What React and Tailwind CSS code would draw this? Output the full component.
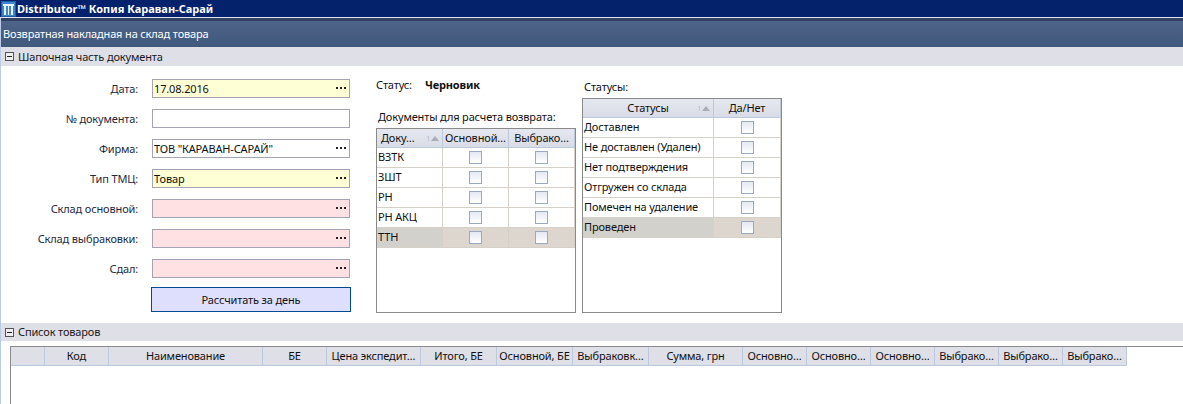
const font = { fontFamily: '"Noto Sans", sans-serif' };

const fields = [
  { label: "Дата:", value: "17.08.2016", bg: "bg-[#ffffd5]", dots: true },
  { label: "№ документа:", value: "", bg: "bg-white", dots: false },
  { label: "Фирма:", value: 'ТОВ "КАРАВАН-САРАЙ"', bg: "bg-white", dots: true },
  { label: "Тип ТМЦ:", value: "Товар", bg: "bg-[#ffffd5]", dots: true },
  { label: "Склад основной:", value: "", bg: "bg-[#ffe1e4]", dots: true },
  { label: "Склад выбраковки:", value: "", bg: "bg-[#ffe1e4]", dots: true },
  { label: "Сдал:", value: "", bg: "bg-[#ffe1e4]", dots: true },
];

const docs = ["ВЗТК", "ЗШТ", "РН", "РН АКЦ", "ТТН"];
const statuses = ["Доставлен", "Не доставлен (Удален)", "Нет подтверждения", "Отгружен со склада", "Помечен на удаление", "Проведен"];

const columns = [
  { title: "", w: "w-[34px]" },
  { title: "Код", w: "w-[64px]" },
  { title: "Наименование", w: "w-[154px]" },
  { title: "БЕ", w: "w-[64px]" },
  { title: "Цена экспедит…", w: "w-[94px]" },
  { title: "Итого, БЕ", w: "w-[76px]" },
  { title: "Основной, БЕ", w: "w-[76px]" },
  { title: "Выбраковк…", w: "w-[76px]" },
  { title: "Сумма, грн", w: "w-[94px]" },
  { title: "Основно…", w: "w-[64px]" },
  { title: "Основно…", w: "w-[64px]" },
  { title: "Основно…", w: "w-[64px]" },
  { title: "Выбрако…", w: "w-[64px]" },
  { title: "Выбрако…", w: "w-[64px]" },
  { title: "Выбрако…", w: "w-[64px]" },
];

function Logo() {
  return (
    <svg width="15" height="16" viewBox="0 0 15 16" className="shrink-0">
      <rect width="15" height="16" fill="#1d5ea8" />
      <rect x="1" y="1" width="13" height="14" fill="#3f86cb" />
      <rect x="2" y="3" width="11" height="2" fill="#e8f2fb" />
      <rect x="3" y="5" width="2" height="9" fill="#e8f2fb" />
      <rect x="7" y="5" width="1" height="9" fill="#e8f2fb" />
      <rect x="10" y="5" width="2" height="9" fill="#e8f2fb" />
    </svg>
  );
}

function SectionHeader({ title, tall }) {
  return (
    <div className={`flex items-center bg-[#dfdfe7] pl-[4px] text-[#1a1a1a] ${tall ? "h-[19px]" : "h-[18px]"}`}>
      <span className="flex h-[9px] w-[9px] items-center justify-center border border-[#555] bg-[#eee]">
        <span className="h-px w-[5px] bg-[#222]" />
      </span>
      <span className="ml-[4px]">{title}</span>
    </div>
  );
}

function Dots() {
  return (
    <span className="mb-px flex gap-[2px]">
      <span className="h-[2px] w-[2px] bg-[#222]" />
      <span className="h-[2px] w-[2px] bg-[#222]" />
      <span className="h-[2px] w-[2px] bg-[#222]" />
    </span>
  );
}

function Field({ label, value, bg, dots }) {
  return (
    <div className="flex h-[30px] shrink-0">
      <span className="w-[137px] pt-[3px] text-right text-[#1e2a3e]">{label}</span>
      <div className={`ml-[14px] flex h-[19px] w-[198px] items-center justify-between border border-[#a3a3b4] pl-px pr-[3px] ${bg}`}>
        <span>{value}</span>
        {dots && <Dots />}
      </div>
    </div>
  );
}

function Check() {
  return <span className="block h-[13px] w-[13px] border border-[#9aa9bf] bg-gradient-to-b from-[#e4e8f2] to-white" />;
}

function SortMark() {
  return (
    <span className="absolute right-[3px] top-[6px] flex items-center text-[7px] leading-none text-[#b5b8c8]">
      1
      <span className="ml-px h-0 w-0 border-x-[4px] border-b-[5px] border-x-transparent border-b-[#a9adb8]" />
    </span>
  );
}

function GridHead({ children, className }) {
  return (
    <div className={`relative flex h-[19px] shrink-0 items-center justify-center whitespace-nowrap border-r border-b border-[#bcc8dc] bg-gradient-to-b from-[#e6e8f0] to-[#d9dce6] ${className}`}>
      {children}
    </div>
  );
}

function CheckCell({ className, active }) {
  return (
    <div className={`flex items-center justify-center border-r border-b border-[#d5d1c9] ${active ? "bg-[#ddd6ce]" : ""} ${className}`}>
      <Check />
    </div>
  );
}

function NameCell({ className, active, children }) {
  return (
    <div className={`flex items-center border-r border-b border-[#d5d1c9] pb-[2px] pl-px ${active ? "bg-[#d3d1cc]" : ""} ${className}`}>
      {children}
    </div>
  );
}

function DocsGrid() {
  return (
    <div className="flex h-[185px] w-[200px] flex-col border border-[#8a8a8a]">
      <div className="flex">
        <GridHead className="w-[66px] justify-start pl-[4px]">
          Доку…
          <SortMark />
        </GridHead>
        <GridHead className="w-[66px]">Основной…</GridHead>
        <GridHead className="w-[66px]">Выбрако…</GridHead>
      </div>
      {docs.map((name) => {
        const active = name === "ТТН";
        return (
          <div key={name} className="flex h-[20px] shrink-0">
            <NameCell className="w-[66px]" active={active}>{name}</NameCell>
            <CheckCell className="w-[66px]" active={active} />
            <CheckCell className="w-[66px]" active={active} />
          </div>
        );
      })}
    </div>
  );
}

function StatusGrid() {
  return (
    <div className="flex h-[215px] w-[200px] flex-col border border-[#8a8a8a]">
      <div className="flex">
        <GridHead className="w-[131px]">
          Статусы
          <SortMark />
        </GridHead>
        <GridHead className="w-[67px]">Да/Нет</GridHead>
      </div>
      {statuses.map((name) => {
        const active = name === "Проведен";
        return (
          <div key={name} className="flex h-[20px] shrink-0">
            <NameCell className="w-[131px]" active={active}>{name}</NameCell>
            <CheckCell className="w-[67px]" active={active} />
          </div>
        );
      })}
    </div>
  );
}

export default function App() {
  return (
    <div className="h-[404px] w-[1183px] overflow-hidden bg-white text-[11px] leading-[14px] tracking-[-0.15px] text-[#111]" style={font}>
      {/* Title bar */}
      <div className="flex h-[17px] items-center gap-px bg-[#04216b] pl-px font-bold tracking-normal text-white">
        <Logo />
        <span>Distributor™ Копия Караван-Сарай</span>
      </div>
      <div className="h-px bg-[#dfe5f0]" />

      <div className="h-[386px] border-l border-[#b9cbe8]">
        {/* Document title */}
        <div className="h-[3px] bg-[#354162]" />
        <div className="flex h-[26px] items-center bg-gradient-to-b from-[#4e6488] to-[#3f587c] pl-[2px] text-white">
          Возвратная накладная на склад товара
        </div>

        <SectionHeader title="Шапочная часть документа" tall />

        <div className="flex h-[257px]">
          {/* Fields */}
          <div className="flex w-[375px] shrink-0 flex-col pt-[13px]">
            {fields.map((f) => (
              <Field key={f.label} {...f} />
            ))}
            <button className="ml-[150px] mt-[-2px] h-[25px] w-[200px] border border-[#004a8f] bg-[#dedffd]">
              Рассчитать за день
            </button>
          </div>

          {/* Documents */}
          <div className="flex w-[206px] shrink-0 flex-col">
            <div className="mt-[12px] flex">
              <span>Статус:</span>
              <span className="ml-[13px] font-bold">Черновик</span>
            </div>
            <div className="mb-[4px] mt-[18px] pl-[2px]">Документы для расчета возврата:</div>
            <DocsGrid />
          </div>

          {/* Statuses */}
          <div className="flex flex-col">
            <div className="mb-[4px] mt-[14px] pl-[2px]">Статусы:</div>
            <StatusGrid />
          </div>
        </div>

        <SectionHeader title="Список товаров" />

        {/* Goods grid */}
        <div className="ml-[9px] mt-[5px] h-[60px] border-l border-t border-[#8a8a8a]">
          <div className="flex">
            {columns.map((c, i) => (
              <div key={i} className={`flex h-[19px] shrink-0 items-center justify-center overflow-hidden whitespace-nowrap border-r border-b border-[#bcc8dc] bg-[#dfdfe7] ${c.w}`}>
                {c.title}
              </div>
            ))}
          </div>
        </div>
      </div>
    </div>
  );
}
